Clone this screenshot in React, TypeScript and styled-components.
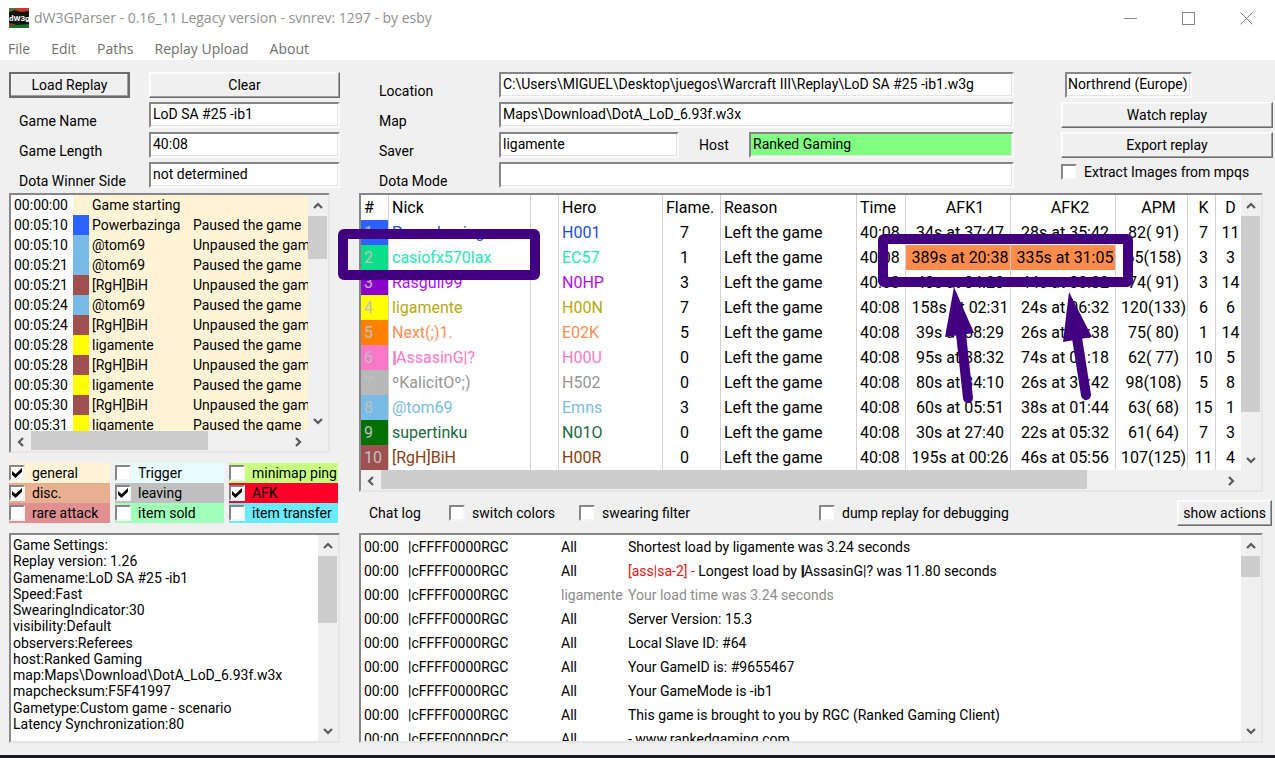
import React from "react";
import styled, { createGlobalStyle, css } from "styled-components";

const face = "#f0f0f0";
const shade = "#868686";
const ink = "#40007f";
const uiFont = `Roboto, "Liberation Sans", sans-serif`;

const GlobalStyle = createGlobalStyle`
  *, *::before, *::after { box-sizing: border-box; }
  body { margin: 0; background: ${face}; }
  button, input { font: inherit; color: inherit; }
`;

const Page = styled.div`
  min-height: 100vh;
  display: flex;
  flex-direction: column;
  background: ${face};
  color: #000;
  font-family: ${uiFont};
  font-size: 14px;
  line-height: 16px;
  white-space: nowrap;
`;

const TitleBar = styled.header`
  height: 36px;
  display: flex;
  align-items: center;
  gap: 5px;
  padding: 0 2px 0 9px;
  background: #fff;
  color: #909090;
  font-family: "Open Sans", sans-serif;
`;

const Title = styled.h1`
  margin: 0;
  flex: 1;
  font-size: 14px;
  line-height: 20px;
  font-weight: 400;
`;

const WindowButton = styled.button`
  width: 53px;
  height: 36px;
  padding: 0;
  border: 0;
  background: none;
  display: grid;
  place-items: center;
`;

const Menu = styled.nav`
  height: 24px;
  display: flex;
  gap: 21px;
  padding: 2px 8px 0;
  background: #fff;
  font-family: "Open Sans", sans-serif;
  font-size: 14px;
  line-height: 22px;

  a {
    color: #707070;
    text-decoration: none;
  }
`;

const Body = styled.main`
  flex: 1;
  display: grid;
  grid-template-columns: 331px minmax(0, 1fr);
  gap: 19px;
  padding: 12px 2px 12px 9px;
`;

const Column = styled.div`
  display: flex;
  flex-direction: column;
  min-width: 0;
`;

const DesktopEdge = styled.footer`
  height: 3px;
  background: #191823;
`;

const PushButton = styled.button<{ $primary?: boolean }>`
  height: 26px;
  padding: 0 5px;
  border: ${(p) => (p.$primary ? "2px" : "1px")} solid;
  border-color: ${(p) => (p.$primary ? "#6c6c6c" : "#fff #6c6c6c #6c6c6c #fff")};
  box-shadow: inset -1px -1px #a0a0a0, inset 1px 1px #f8f8f8;
  background: ${face};
`;

const Field = styled.input<{ $tone?: string }>`
  height: 26px;
  width: 100%;
  min-width: 0;
  padding: 0 3px 2px 2px;
  border: 2px solid;
  border-color: ${shade} #fafafa #fafafa ${shade};
  border-radius: 0;
  box-shadow: inset -1px -1px #e3e3e3;
  background: ${(p) => p.$tone ?? "#fff"};
  outline: none;
`;

const FieldLabel = styled.label<{ $inset?: number }>`
  height: 26px;
  padding-top: 11px;
  padding-left: ${(p) => p.$inset ?? 0}px;
`;

const GameForm = styled.form`
  display: grid;
  grid-template-columns: 121px 1fr;
  gap: 4px 19px;
`;

const ReplayForm = styled.form`
  display: grid;
  grid-template-columns: 120px minmax(0, 1fr) 212px;
  padding-left: 20px;
`;

const Stack = styled.div<{ $after?: number }>`
  display: grid;
  grid-auto-rows: 26px;
  gap: 4px;
  padding-right: ${(p) => p.$after ?? 0}px;
`;

const SaverRow = styled.div`
  display: grid;
  grid-template-columns: 180px 70px minmax(0, 1fr);

  label {
    padding: 5px 0 0 20px;
  }
`;

const ExtractRow = styled.div`
  padding-top: 2px;
`;

const RealmField = styled(Field)`
  width: 127px;
  margin-left: 4px;
  padding: 0 0 2px 1px;
`;

const Panel = styled.section<{ $h?: number; $top?: number; $side?: number }>`
  position: relative;
  ${(p) => (p.$h ? css`height: ${p.$h}px;` : css`flex: 1 1 0; min-height: 208px;`)}
  margin-top: ${(p) => p.$top ?? 0}px;
  margin-right: ${(p) => p.$side ?? 0}px;
  border: 2px solid;
  border-color: ${shade} #e6e6e6 #e6e6e6 ${shade};
  background: #fff;
  display: flex;
  flex-direction: column;
`;

const PanelRow = styled.div`
  flex: 1;
  min-height: 0;
  display: flex;
`;

const Viewport = styled.div`
  flex: 1;
  min-width: 0;
  overflow: hidden;
`;

/* ---- scroll bars ---- */

const Track = styled.div<{ $dir: "v" | "h"; $corner?: boolean }>`
  flex: none;
  display: flex;
  flex-direction: ${(p) => (p.$dir === "v" ? "column" : "row")};
  ${(p) => (p.$dir === "v" ? "width: 20px;" : "height: 20px;")}
  ${(p) => (p.$corner ? "padding-right: 20px;" : "")}
  background: ${face};
`;

const Arrow = styled.button`
  flex: none;
  width: 20px;
  height: 21px;
  padding: 0;
  border: 0;
  background: none;
  display: grid;
  place-items: center;
`;

const Run = styled.div<{ $dir: "v" | "h" }>`
  flex: 1;
  display: flex;
  flex-direction: ${(p) => (p.$dir === "v" ? "column" : "row")};
`;

const Thumb = styled.div<{ $dir: "v" | "h" }>`
  background: #cdcdcd;
  ${(p) => (p.$dir === "v" ? "width: 19px;" : "height: 19px;")}
`;

const turns = { up: 0, right: 90, down: 180, left: 270 };

function Chevron({ to }: { to: keyof typeof turns }) {
  return (
    <svg width="12" height="12" viewBox="0 0 12 12" aria-hidden="true">
      <path
        d="M2 8 L6 4 L10 8"
        fill="none"
        stroke="#5a5a5a"
        strokeWidth="2.2"
        transform={`rotate(${turns[to]} 6 6)`}
      />
    </svg>
  );
}

function ScrollBar({ dir, size, corner }: { dir: "v" | "h"; size: number; corner?: boolean }) {
  const share = `${size}%`;
  return (
    <Track $dir={dir} $corner={corner}>
      <Arrow type="button" aria-label={dir === "v" ? "Scroll up" : "Scroll left"}>
        <Chevron to={dir === "v" ? "up" : "left"} />
      </Arrow>
      <Run $dir={dir}>
        <Thumb $dir={dir} style={{ flexBasis: share }} />
      </Run>
      <Arrow type="button" aria-label={dir === "v" ? "Scroll down" : "Scroll right"}>
        <Chevron to={dir === "v" ? "down" : "right"} />
      </Arrow>
    </Track>
  );
}

/* ---- tick boxes ---- */

const Tick = styled.label<{ $tone?: string }>`
  display: flex;
  align-items: center;
  gap: 7px;
  background: ${(p) => p.$tone ?? "transparent"};
`;

const Box = styled.input`
  appearance: none;
  flex: none;
  width: 16px;
  height: 16px;
  margin: 0;
  border: 2px solid;
  border-color: ${shade} #f4f4f4 #f4f4f4 ${shade};
  background: #fff;

  &:checked::before {
    content: "";
    display: block;
    width: 10px;
    height: 10px;
    margin: 1px;
    background: #000;
    clip-path: polygon(0 30%, 35% 60%, 100% 0, 100% 38%, 35% 100%, 0 68%);
  }
`;

function TickBox(props: { label: string; tone?: string; on?: boolean }) {
  return (
    <Tick $tone={props.tone}>
      <Box type="checkbox" defaultChecked={props.on} />
      {props.label}
    </Tick>
  );
}

/* ---- event list ---- */

const EventTable = styled.table`
  width: 100%;
  table-layout: fixed;
  border-collapse: collapse;

  td {
    height: 20px;
    padding: 0 0 0 3px;
    overflow: hidden;
    background: #fff5d6;
  }
  td:first-child {
    background: #fff;
  }
`;

const Swatch = styled.td<{ $tone?: string }>`
  && {
    background: ${(p) => p.$tone ?? "#fff5d6"};
  }
`;

const blue = "#2c62ff";
const sky = "#78bbe6";
const brown = "#a05050";
const yellow = "#ffff00";

const P = "Paused the game";
const U = "Unpaused the game";
const events: [string, string | undefined, string, string][] = [
  ["00:00:00", undefined, "Game starting", ""],
  ["00:05:10", blue, "Powerbazinga", P],
  ["00:05:10", sky, "@tom69", U],
  ["00:05:21", sky, "@tom69", P],
  ["00:05:21", brown, "[RgH]BiH", U],
  ["00:05:24", sky, "@tom69", P],
  ["00:05:24", brown, "[RgH]BiH", U],
  ["00:05:28", yellow, "ligamente", P],
  ["00:05:28", brown, "[RgH]BiH", U],
  ["00:05:30", yellow, "ligamente", P],
  ["00:05:30", brown, "[RgH]BiH", U],
  ["00:05:31", yellow, "ligamente", P],
];

/* ---- filters ---- */

const Filters = styled.div`
  display: grid;
  grid-template-columns: 101px 109px 109px;
  grid-auto-rows: 20px;
  column-gap: 5px;
  margin: 10px 2px 10px 0;
`;

const filters = [
  { label: "general", tone: "#fff5d6", on: true },
  { label: "Trigger", tone: "#e8fcff" },
  { label: "minimap ping", tone: "#c8ff80" },
  { label: "disc.", tone: "#e8b090", on: true },
  { label: "leaving", tone: "#c0c0c0", on: true },
  { label: "AFK", tone: "#ff0028", on: true },
  { label: "rare attack", tone: "#e09090" },
  { label: "item sold", tone: "#a0ffb8" },
  { label: "item transfer", tone: "#68ecff" },
];

/* ---- settings ---- */

const SettingsText = styled.div`
  flex: 1;
  display: flex;
  flex-direction: column;
  justify-content: space-between;
  padding: 2px 2px 9px;
`;

const settings = [
  "Game Settings:",
  "Replay version: 1.26",
  "Gamename:LoD SA #25 -ib1",
  "Speed:Fast",
  "SwearingIndicator:30",
  "visibility:Default",
  "observers:Referees",
  "host:Ranked Gaming",
  "map:Maps\\Download\\DotA_LoD_6.93f.w3x",
  "mapchecksum:F5F41997",
  "Gametype:Custom game - scenario",
  "Latency Synchronization:80",
];

/* ---- players ---- */

const PlayerTable = styled.table`
  width: 100%;
  table-layout: fixed;
  border-collapse: separate;
  border-spacing: 0;
  font-size: 16px;
  line-height: 25px;

  th, td {
    height: 25px;
    padding: 0 0 0 3px;
    border-left: 1px solid #d0d0d0;
    font-weight: 400;
    text-align: left;
    overflow: hidden;
  }
  th:first-child, td:first-child {
    border-left: 0;
  }
`;

const Cell = styled.td<{ $tone?: string; $bg?: string; $mid?: boolean }>`
  ${(p) => p.$tone && `color: ${p.$tone};`}
  ${(p) => p.$bg && `background: ${p.$bg};`}
  ${(p) => p.$mid && `&&& { text-align: center; padding: 0 0 0 4px; }`}
`;

const FlameCell = styled(Cell)`
  &&& {
    text-align: center;
    padding: 0 14px 0 0;
  }
`;

const Head = styled.th<{ $mid?: boolean; $wide?: boolean }>`
  ${(p) => p.$mid && `&&& { text-align: center; padding: 0 0 0 ${p.$wide ? 14 : 4}px; }`}
`;

const Slot = styled(Cell)`
  color: #c0c0c0;
`;

const Bar = styled.b`
  text-shadow: 1px 0 currentColor;
`;

const columns: [string, number | undefined, boolean?][] = [
  ["#", 27],
  ["Nick", 142],
  ["", 28],
  ["Hero", 104],
  ["Flame.", 58],
  ["Reason", undefined],
  ["Time", 49],
  ["AFK1", 105, true],
  ["AFK2", 105, true],
  ["APM", 72, true],
  ["K", 28, true],
  ["D", 26, true],
];

type Player = {
  nick: React.ReactNode;
  hero: string;
  slot: string;
  tone: string;
  flame: number;
  afk: [string, string];
  apm: string;
  k: number;
  d: number;
  idle?: boolean;
};

const players: Player[] = [
  { nick: "Powerbazinga", hero: "H001", slot: blue, tone: "#1c4ce8", flame: 7, afk: ["34s at 37:47", "28s at 35:42"], apm: "82( 91)", k: 7, d: 11 },
  { nick: "casiofx570lax", hero: "EC57", slot: "#0ade88", tone: "#28e6b8", flame: 1, afk: ["389s at 20:38", "335s at 31:05"], apm: "65(158)", k: 3, d: 3, idle: true },
  { nick: "Rasgull99", hero: "N0HP", slot: "#8c00cc", tone: "#b010f0", flame: 3, afk: ["43s at 34:23", "44s at 33:32"], apm: "74( 91)", k: 3, d: 14 },
  { nick: "ligamente", hero: "H00N", slot: yellow, tone: "#b8a810", flame: 7, afk: ["158s at 02:31", "24s at 06:32"], apm: "120(133)", k: 6, d: 6 },
  { nick: "Next(;)1.", hero: "E02K", slot: "#ff8000", tone: "#ff8c50", flame: 5, afk: ["39s at 38:29", "26s at 33:38"], apm: "75( 80)", k: 1, d: 14 },
  { nick: <><Bar>|</Bar>AssasinG|?</>, hero: "H00U", slot: "#fa78c8", tone: "#fa78c8", flame: 0, afk: ["95s at 38:32", "74s at 01:18"], apm: "62( 77)", k: 10, d: 5 },
  { nick: "ºKalicitOº;)", hero: "H502", slot: "#b8b8b8", tone: "#969696", flame: 0, afk: ["80s at 34:10", "26s at 35:42"], apm: "98(108)", k: 5, d: 8 },
  { nick: "@tom69", hero: "Emns", slot: sky, tone: "#78bbe6", flame: 3, afk: ["60s at 05:51", "38s at 01:44"], apm: "63( 68)", k: 15, d: 1 },
  { nick: "supertinku", hero: "N01O", slot: "#007000", tone: "#186840", flame: 0, afk: ["30s at 27:40", "22s at 05:32"], apm: "61( 64)", k: 7, d: 3 },
  { nick: "[RgH]BiH", hero: "H00R", slot: brown, tone: "#8c3c10", flame: 0, afk: ["195s at 00:26", "46s at 05:56"], apm: "107(125)", k: 11, d: 4 },
];

const MarkLeft = styled.svg`
  position: absolute;
  left: -23px;
  top: 34px;
  pointer-events: none;
`;

const MarkRight = styled.svg`
  position: absolute;
  right: 128px;
  top: 39px;
  pointer-events: none;
`;

/* ---- chat ---- */

const ChatBar = styled.div`
  height: 41px;
  display: grid;
  grid-template-columns: 80px 130px 240px 1fr auto;
  align-items: center;
  padding: 1px 1px 0 10px;
`;

const ChatRow = styled.div<{ $dim?: boolean }>`
  display: grid;
  grid-template-columns: 44px 153px 67px 1fr;
  padding-left: 3px;
  line-height: 24px;

  > :nth-child(n + 3) {
    color: ${(p) => (p.$dim ? "#8c8c8c" : "inherit")};
  }
`;

const Flag = styled.span`
  color: #f01010;
`;

const chat: [string, React.ReactNode][] = [
  ["All", "Shortest load by ligamente was 3.24 seconds"],
  ["All", <><Flag>[ass|sa-2] - </Flag> Longest load by <Bar>|</Bar>AssasinG|? was 11.80 seconds</>],
  ["ligamente", "Your load time was 3.24 seconds"],
  ["All", "Server Version: 15.3"],
  ["All", "Local Slave ID: #64"],
  ["All", "Your GameID is: #9655467"],
  ["All", "Your GameMode is -ib1"],
  ["All", "This game is brought to you by RGC (Ranked Gaming Client)"],
  ["All", "- www.rankedgaming.com"],
];

function AppIcon() {
  return (
    <svg width="20" height="20" viewBox="0 0 20 20" aria-hidden="true">
      <rect width="20" height="20" fill="#14140f" />
      <path d="M5 0H20V3L12 4L5 2Z" fill="#c03a28" />
      <path d="M0 0H7L4 3L0 4Z" fill="#4c7a34" />
      <path d="M0 15L8 17L20 16V20H0Z" fill="#187028" />
      <path d="M0 15L6 17L0 18Z" fill="#a03024" />
      <text x="0" y="13" fontSize="8" fontWeight="700" fontFamily="Roboto, sans-serif" fill="#fff">
        dW3g
      </text>
    </svg>
  );
}

export default function App() {
  return (
    <Page>
      <GlobalStyle />
      <TitleBar>
        <AppIcon />
        <Title>dW3GParser - 0.16_11 Legacy version - svnrev: 1297 - by esby</Title>
        <WindowButton aria-label="Minimize">
          <svg width="13" height="13"><path d="M0 6.5H13" stroke="#888" /></svg>
        </WindowButton>
        <WindowButton aria-label="Maximize">
          <svg width="13" height="13"><rect x=".5" y=".5" width="12" height="12" fill="none" stroke="#888" /></svg>
        </WindowButton>
        <WindowButton aria-label="Close">
          <svg width="13" height="13"><path d="M.5 .5L12.5 12.5M12.5 .5L.5 12.5" stroke="#888" /></svg>
        </WindowButton>
      </TitleBar>
      <Menu>
        {["File", "Edit", "Paths", "Replay Upload", "About"].map((m) => (
          <a key={m} href="#">{m}</a>
        ))}
      </Menu>

      <Body>
        <Column>
          <GameForm>
            <PushButton type="button" $primary>Load Replay</PushButton>
            <PushButton type="button">Clear</PushButton>
            <FieldLabel $inset={10} htmlFor="name">Game Name</FieldLabel>
            <Field id="name" defaultValue="LoD SA #25 -ib1" />
            <FieldLabel $inset={10} htmlFor="length">Game Length</FieldLabel>
            <Field id="length" defaultValue="40:08" />
            <FieldLabel $inset={10} htmlFor="winner">Dota Winner Side</FieldLabel>
            <Field id="winner" defaultValue="not determined" />
          </GameForm>

          <Panel $h={260} $top={5} $side={10}>
            <PanelRow>
              <Viewport>
                <EventTable>
                  <colgroup>
                    <col style={{ width: 62 }} />
                    <col style={{ width: 16 }} />
                    <col style={{ width: 101 }} />
                    <col />
                  </colgroup>
                  <tbody>
                    {events.map(([time, tone, who, what], i) => (
                      <tr key={i}>
                        <td>{time}</td>
                        <Swatch $tone={tone} />
                        <td>{who}</td>
                        <td>{what}</td>
                      </tr>
                    ))}
                  </tbody>
                </EventTable>
              </Viewport>
              <ScrollBar dir="v" size={22} />
            </PanelRow>
            <ScrollBar dir="h" size={69} corner />
          </Panel>

          <Filters>
            {filters.map((f) => (
              <TickBox key={f.label} {...f} />
            ))}
          </Filters>

          <Panel>
            <PanelRow>
              <SettingsText>
                {settings.map((s) => (
                  <div key={s}>{s}</div>
                ))}
              </SettingsText>
              <ScrollBar dir="v" size={41} />
            </PanelRow>
          </Panel>
        </Column>

        <Column>
          <ReplayForm>
            <Stack>
              <FieldLabel htmlFor="location">Location</FieldLabel>
              <FieldLabel htmlFor="map">Map</FieldLabel>
              <FieldLabel htmlFor="saver">Saver</FieldLabel>
              <FieldLabel htmlFor="mode">Dota Mode</FieldLabel>
            </Stack>
            <Stack $after={47}>
              <Field id="location" defaultValue="C:\Users\MIGUEL\Desktop\juegos\Warcraft III\Replay\LoD SA #25 -ib1.w3g" />
              <Field id="map" defaultValue="Maps\Download\DotA_LoD_6.93f.w3x" />
              <SaverRow>
                <Field id="saver" defaultValue="ligamente" />
                <label htmlFor="host">Host</label>
                <Field id="host" $tone="#80ff80" defaultValue="Ranked Gaming" />
              </SaverRow>
              <Field id="mode" defaultValue="" />
            </Stack>
            <Stack>
              <RealmField aria-label="Realm" defaultValue="Northrend (Europe)" />
              <PushButton type="button">Watch replay</PushButton>
              <PushButton type="button">Export replay</PushButton>
              <ExtractRow>
                <TickBox label="Extract Images from mpqs" />
              </ExtractRow>
            </Stack>
          </ReplayForm>

          <Panel $h={299} $top={5} $side={10}>
            <PanelRow>
              <Viewport>
                <PlayerTable>
                  <colgroup>
                    {columns.map(([name, width], i) => (
                      <col key={name + i} style={{ width }} />
                    ))}
                  </colgroup>
                  <thead>
                    <tr>
                      {columns.map(([name, , mid], i) => (
                        <Head key={name + i} $mid={mid} $wide={name.length > 1}>{name}</Head>
                      ))}
                    </tr>
                  </thead>
                  <tbody>
                    {players.map((p, i) => (
                      <tr key={p.hero}>
                        <Slot $bg={p.slot}>{i + 1}</Slot>
                        <Cell $tone={p.tone}>{p.nick}</Cell>
                        <Cell />
                        <Cell $tone={p.tone}>{p.hero}</Cell>
                        <FlameCell>{p.flame}</FlameCell>
                        <Cell>Left the game</Cell>
                        <Cell>40:08</Cell>
                        {p.afk.map((a) => (
                          <Cell key={a} $mid $bg={p.idle ? "#ff8c4c" : undefined}>{a}</Cell>
                        ))}
                        <Cell $mid>{p.apm}</Cell>
                        <Cell $mid>{p.k}</Cell>
                        <Cell $mid>{p.d}</Cell>
                      </tr>
                    ))}
                  </tbody>
                </PlayerTable>
              </Viewport>
              <ScrollBar dir="v" size={84} />
            </PanelRow>
            <ScrollBar dir="h" size={84} corner />
            <MarkLeft width="202" height="51" aria-hidden="true">
              <rect x="5" y="5" width="192" height="41" rx="1" fill="none" stroke={ink} strokeWidth="10" strokeLinejoin="round" />
            </MarkLeft>
            <MarkRight width="255" height="172" aria-hidden="true">
              <g fill="none" stroke={ink} strokeWidth="10" strokeLinejoin="round">
                <rect x="5" y="5" width="245" height="43" rx="1" />
                <path d="M83 100L90 164M199 104L208 161" strokeLinecap="round" />
              </g>
              <path d="M76 53L67 103L96 99ZM191 58L185 108L214 103Z" fill={ink} />
            </MarkRight>
          </Panel>

          <ChatBar>
            <span>Chat log</span>
            <TickBox label="switch colors" />
            <TickBox label="swearing filter" />
            <TickBox label="dump replay for debugging" />
            <PushButton type="button">show actions</PushButton>
          </ChatBar>

          <Panel $side={10}>
            <PanelRow>
              <Viewport>
                {chat.map(([to, text], i) => (
                  <ChatRow key={i} $dim={to !== "All"}>
                    <span>00:00</span>
                    <span>|cFFFF0000RGC</span>
                    <span>{to}</span>
                    <span>{text}</span>
                  </ChatRow>
                ))}
              </Viewport>
              <ScrollBar dir="v" size={13} />
            </PanelRow>
          </Panel>
        </Column>
      </Body>
      <DesktopEdge />
    </Page>
  );
}
